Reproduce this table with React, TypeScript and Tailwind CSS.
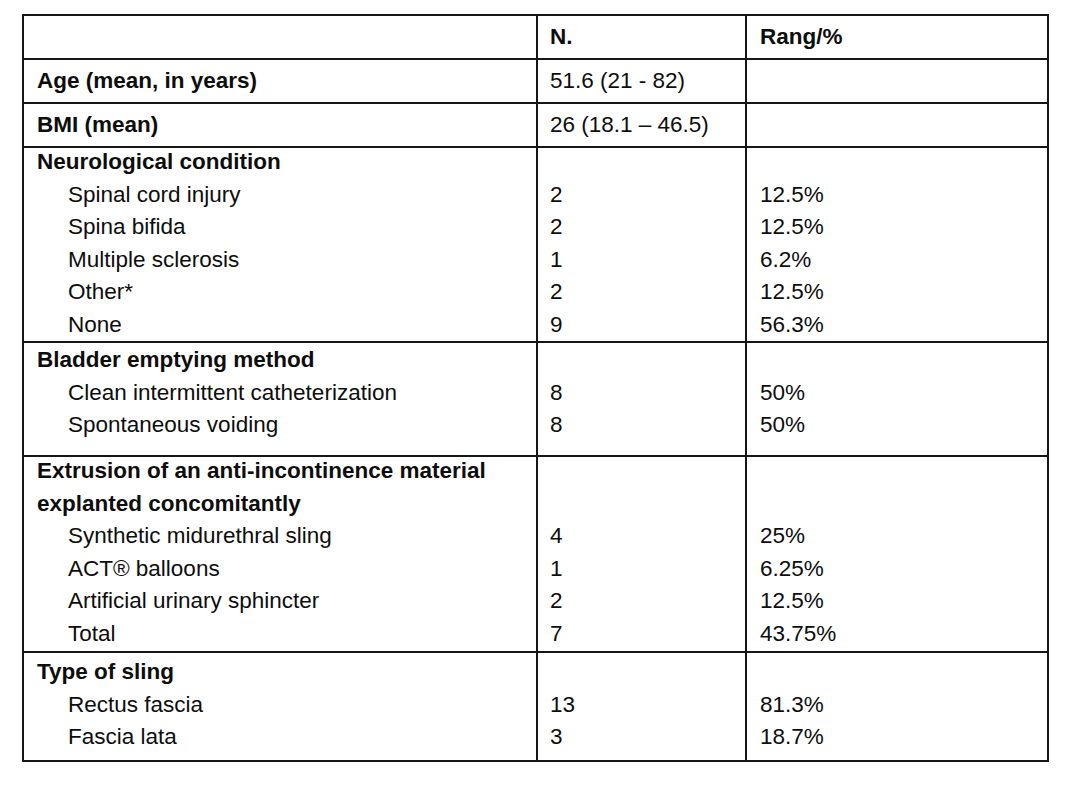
type Line = { label: string; bold?: boolean; sub?: boolean; n?: string; pct?: string };

type Section = { height: string; shift: string; lines: Line[] };

const sections: Section[] = [
  {
    height: "h-[195px]",
    shift: "-mt-[2px]",
    lines: [
      { label: "Neurological condition", bold: true },
      { label: "Spinal cord injury", sub: true, n: "2", pct: "12.5%" },
      { label: "Spina bifida", sub: true, n: "2", pct: "12.5%" },
      { label: "Multiple sclerosis", sub: true, n: "1", pct: "6.2%" },
      { label: "Other*", sub: true, n: "2", pct: "12.5%" },
      { label: "None", sub: true, n: "9", pct: "56.3%" },
    ],
  },
  {
    height: "h-[114px]",
    shift: "mt-[1px]",
    lines: [
      { label: "Bladder emptying method", bold: true },
      { label: "Clean intermittent catheterization", sub: true, n: "8", pct: "50%" },
      { label: "Spontaneous voiding", sub: true, n: "8", pct: "50%" },
    ],
  },
  {
    height: "h-[196px]",
    shift: "-mt-[2px]",
    lines: [
      { label: "Extrusion of an anti-incontinence material", bold: true },
      { label: "explanted concomitantly", bold: true },
      { label: "Synthetic midurethral sling", sub: true, n: "4", pct: "25%" },
      { label: "ACT® balloons", sub: true, n: "1", pct: "6.25%" },
      { label: "Artificial urinary sphincter", sub: true, n: "2", pct: "12.5%" },
      { label: "Total", sub: true, n: "7", pct: "43.75%" },
    ],
  },
  {
    height: "h-[109px]",
    shift: "mt-[3px]",
    lines: [
      { label: "Type of sling", bold: true },
      { label: "Rectus fascia", sub: true, n: "13", pct: "81.3%" },
      { label: "Fascia lata", sub: true, n: "3", pct: "18.7%" },
    ],
  },
];

const cols = "grid grid-cols-[512px_209px_302px]";

function SimpleRow({ label, n, pct, bold, first }: { label: string; n: string; pct: string; bold?: boolean; first?: boolean }) {
  return (
    <div className={`${cols} ${first ? "h-[42px]" : "h-[44px] border-t-2 border-[#161616]"}`}>
      <div className="flex items-center pl-[13px] font-bold">{label}</div>
      <div className={`flex items-center border-l-2 border-[#161616] pl-[12px] ${bold ? "font-bold" : ""}`}>{n}</div>
      <div className={`flex items-center border-l-2 border-[#161616] pl-[13px] ${bold ? "font-bold" : ""}`}>{pct}</div>
    </div>
  );
}

function SectionRow({ section }: { section: Section }) {
  return (
    <div className={`${cols} ${section.height} border-t-2 border-[#161616] leading-[32.5px]`}>
      <div className={`pl-[13px] ${section.shift}`}>
        {section.lines.map((l) => (
          <div key={l.label} className={`h-[32.5px] whitespace-nowrap ${l.bold ? "font-bold" : ""} ${l.sub ? "pl-[31px]" : ""}`}>
            {l.label}
          </div>
        ))}
      </div>
      <div className="border-l-2 border-[#161616]">
        <div className={`pl-[12px] ${section.shift}`}>
          {section.lines.map((l) => (
            <div key={l.label} className="h-[32.5px]">{l.n ?? ""}</div>
          ))}
        </div>
      </div>
      <div className="border-l-2 border-[#161616]">
        <div className={`pl-[13px] ${section.shift}`}>
          {section.lines.map((l) => (
            <div key={l.label} className="h-[32.5px]">{l.pct ?? ""}</div>
          ))}
        </div>
      </div>
    </div>
  );
}

export default function App() {
  return (
    <div className="min-h-[794px] w-[1080px] bg-white pt-[14px] font-['Liberation_Sans',Arial,sans-serif] text-[22.5px] text-[#0d0d0d]">
      <div className="ml-[22px] w-[1027px] border-2 border-[#161616]">
        <SimpleRow first label="" n="N." pct="Rang/%" bold />
        <SimpleRow label="Age (mean, in years)" n="51.6 (21 - 82)" pct="" />
        <SimpleRow label="BMI (mean)" n="26 (18.1 – 46.5)" pct="" />
        {sections.map((s) => (
          <SectionRow key={s.lines[0].label} section={s} />
        ))}
      </div>
    </div>
  );
}
